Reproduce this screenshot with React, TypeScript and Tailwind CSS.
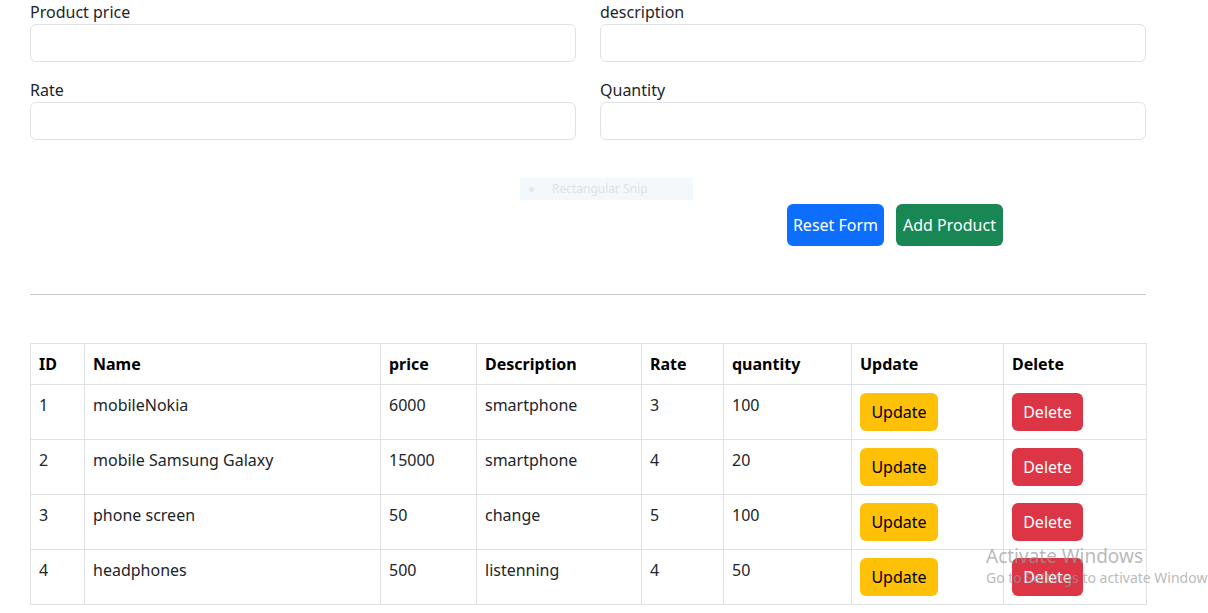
import React from "react";

const products = [
  { id: 1, name: "mobileNokia", price: 6000, description: "smartphone", rate: 3, quantity: 100 },
  { id: 2, name: "mobile Samsung Galaxy", price: 15000, description: "smartphone", rate: 4, quantity: 20 },
  { id: 3, name: "phone screen", price: 50, description: "change", rate: 5, quantity: 100 },
  { id: 4, name: "headphones", price: 500, description: "listenning", rate: 4, quantity: 50 },
];

const cols = ["ID", "Name", "price", "Description", "Rate", "quantity", "Update", "Delete"];
const widths = ["w-[54px]", "w-[296px]", "w-[96px]", "w-[165px]", "w-[82px]", "w-[128px]", "w-[152px]", "w-[143px]"];

function Field({ label }: { label: string }) {
  return (
    <div className="mb-4">
      <label className="block h-6 leading-6 text-[#212529]">{label}</label>
      <input className="block w-full h-[38px] rounded-md border border-[#dee2e6] bg-white px-3" />
    </div>
  );
}

export default function App() {
  return (
    <div className="relative min-h-[613px] bg-white text-[16px] text-[#212529] font-['Noto_Sans',sans-serif] overflow-hidden">
      <div className="w-[1116px] ml-[30px]">
        {/* form */}
        <div className="grid grid-cols-2 gap-x-6">
          <Field label="Product price" />
          <Field label="description" />
          <Field label="Rate" />
          <Field label="Quantity" />
        </div>

        <div className="flex justify-start gap-3 pl-[757px] mt-12">
          <button className="w-[97px] h-[42px] rounded-md bg-[#0d6efd] text-white">Reset Form</button>
          <button className="w-[107px] h-[42px] rounded-md bg-[#198754] text-white">Add Product</button>
        </div>

        <hr className="mt-12 border-t border-[#c9c9c9]" />

        {/* table */}
        <table className="mt-12 w-full table-fixed border-collapse">
          <colgroup>
            {widths.map((w, i) => (
              <col key={i} className={w} />
            ))}
          </colgroup>
          <thead>
            <tr>
              {cols.map((c) => (
                <th key={c} className="border border-[#dee2e6] px-2 py-2 text-left font-bold leading-6 text-black">
                  {c}
                </th>
              ))}
            </tr>
          </thead>
          <tbody>
            {products.map((p) => (
              <tr key={p.id}>
                <td className="border border-[#dee2e6] p-2 align-top leading-6">{p.id}</td>
                <td className="border border-[#dee2e6] p-2 align-top leading-6">{p.name}</td>
                <td className="border border-[#dee2e6] p-2 align-top leading-6">{p.price}</td>
                <td className="border border-[#dee2e6] p-2 align-top leading-6">{p.description}</td>
                <td className="border border-[#dee2e6] p-2 align-top leading-6">{p.rate}</td>
                <td className="border border-[#dee2e6] p-2 align-top leading-6">{p.quantity}</td>
                <td className="border border-[#dee2e6] p-2 align-top">
                  <button className="w-[78px] h-[38px] rounded-md bg-[#ffc107] text-black">Update</button>
                </td>
                <td className="border border-[#dee2e6] p-2 align-top">
                  <button className="w-[71px] h-[38px] rounded-md bg-[#dc3545] text-white">Delete</button>
                </td>
              </tr>
            ))}
          </tbody>
        </table>
      </div>

      {/* snip tool remnant */}
      <div className="absolute left-[520px] top-[178px] w-[173px] h-[22px] bg-[#f3f8fd] flex items-center text-[12px] text-[#e2e2e2]">
        <span className="ml-[9px] w-[5px] h-[5px] rounded-full bg-[#e6e6e6]" />
        <span className="ml-[18px]">Rectangular Snip</span>
      </div>

      {/* activation watermark */}
      <div className="absolute left-[986px] top-[544px] pointer-events-none whitespace-nowrap text-[#9a9a9a]/70 font-['Noto_Sans',sans-serif]">
        <div className="text-[19px] leading-6">Activate Windows</div>
        <div className="text-[14px] leading-5">Go to Settings to activate Windows.</div>
      </div>
    </div>
  );
}
